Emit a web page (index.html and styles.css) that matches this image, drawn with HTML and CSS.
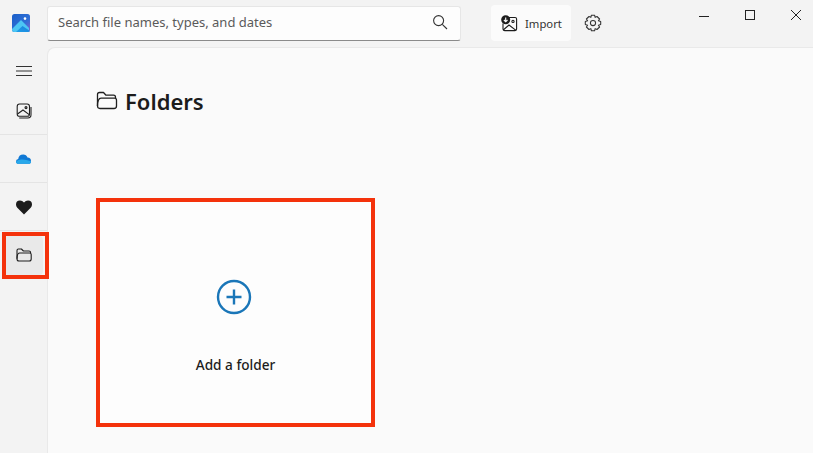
FILE: index.html
```html
<!DOCTYPE html>
<html lang="en">
<head>
<meta charset="utf-8">
<title>Folders</title>
<link rel="stylesheet" href="styles.css">
</head>
<body>
<div class="app">
  <header class="topbar">
    <div class="logo-cell">
      <svg class="logo" width="18" height="18" viewBox="0 0 18 18">
        <defs>
          <linearGradient id="lg" x1="0" y1="0" x2="1" y2="1"><stop offset="0" stop-color="#1a5fc8"/><stop offset="0.6" stop-color="#2f6fd6"/><stop offset="1" stop-color="#8a63cc"/></linearGradient>
          <linearGradient id="lm" x1="0" y1="1" x2="1" y2="0"><stop offset="0" stop-color="#1f9fe8"/><stop offset="1" stop-color="#1a7fdc"/></linearGradient>
        </defs>
        <rect width="18" height="18" rx="2.5" fill="url(#lg)"/>
        <circle cx="13" cy="4.6" r="1.3" fill="#fff"/>
        <path d="M0 15 L9 6 L17 14 V15.5 Q17 18 15 18 H2.5 Q0 18 0 15.5Z" fill="#4cc6f4"/>
        <path d="M4 18 L10.5 12 L18 17 Q17.5 18 15.5 18Z" fill="url(#lm)"/>
      </svg>
    </div>
    <div class="search">
      <span class="search-text">Search file names, types, and dates</span>
      <svg width="16" height="16" viewBox="0 0 16 16" fill="none" stroke="#333" stroke-width="1.1"><circle cx="6.6" cy="6.6" r="5"/><path d="M10.3 10.3 L15 15"/></svg>
    </div>
    <button class="import">
      <svg width="17" height="17" viewBox="0 0 17 17" fill="none" stroke="#1c1c1c" stroke-width="1.1">
        <path d="M8 2.5 H14 Q15.6 2.5 15.6 4 V14 Q15.6 15.6 14 15.6 H3.6 Q2 15.6 2 14 V8.5"/>
        <path d="M2.2 15 L8 10 L15 15.4"/>
        <circle cx="12" cy="6.4" r="1.1"/>
        <circle cx="4.7" cy="4.7" r="4.5" fill="#1c1c1c" stroke="none"/>
        <path d="M4.7 2.4 V6.6 M2.9 5 L4.7 6.8 L6.5 5" stroke="#fff"/>
      </svg>
      <span>Import</span>
    </button>
    <svg class="gear" width="18" height="18" viewBox="0 0 18 18" fill="none" stroke="#333" stroke-width="1.05" stroke-linejoin="round">
      <circle cx="9" cy="9" r="2.6"/>
      <path d="M7.4 1.2 H10.6 L11.1 3.4 L13 2.5 L15.6 5 L14.4 6.8 L16.7 7.4 V10.6 L14.4 11.2 L15.6 13 L13 15.5 L11.1 14.6 L10.6 16.8 H7.4 L6.9 14.6 L5 15.5 L2.4 13 L3.6 11.2 L1.3 10.6 V7.4 L3.6 6.8 L2.4 5 L5 2.5 L6.9 3.4Z"/>
    </svg>
    <div class="window-controls">
      <svg width="12" height="12" viewBox="0 0 12 12" stroke="#222" stroke-width="1"><path d="M1 7.5 H11"/></svg>
      <svg width="12" height="12" viewBox="0 0 12 12" fill="none" stroke="#222" stroke-width="1"><rect x="1.5" y="1.5" width="9" height="9"/></svg>
      <svg width="12" height="12" viewBox="0 0 12 12" stroke="#222" stroke-width="1"><path d="M1 1 L11 11 M11 1 L1 11"/></svg>
    </div>
  </header>
  <div class="body">
    <nav class="nav">
      <div class="nav-item nav-menu">
        <svg width="16" height="12" viewBox="0 0 16 12" stroke="#333" stroke-width="1"><path d="M0 1.5 H16 M0 6 H16 M0 10.5 H16"/></svg>
      </div>
      <div class="nav-item nav-sep">
        <svg width="16" height="16" viewBox="0 0 16 16" fill="none" stroke="#1f1f1f" stroke-width="1.1">
          <rect x="1.2" y="1" width="12.3" height="12.3" rx="2.4"/>
          <path d="M1.5 11 L7 7 L13.2 11.6"/><circle cx="10" cy="4.6" r="1"/>
          <path d="M3.2 15 H11.8 Q15 15 15 11.8 V4"/>
        </svg>
      </div>
      <div class="nav-item nav-sep">
        <svg width="15" height="10" viewBox="0 0 15 10"><path d="M2.6 9.8 Q0 9.8 0 7.4 Q0 5.3 2.2 4.9 Q2.9 0.6 7.2 0.6 Q10.4 0.6 11.5 3.6 Q15 3.8 15 7.2 Q15 9.8 12.4 9.8Z" fill="#1078d4"/><path d="M2.6 9.8 Q0 9.8 0 7.4 Q3 5 6.5 5.6 Q10 6 15 7.2 Q15 9.8 12.4 9.8Z" fill="#28a8ea"/></svg>
      </div>
      <div class="nav-item nav-sep nav-heart">
        <svg width="16" height="15" viewBox="0 0 16 15"><path d="M8 14.5 L1.3 7.8 Q0 6.4 0 4.5 Q0 0.5 4 0.5 Q6.4 0.5 8 2.4 Q9.6 0.5 12 0.5 Q16 0.5 16 4.5 Q16 6.4 14.7 7.8Z" fill="#1c1c1c"/></svg>
      </div>
      <div class="nav-item nav-active">
        <div class="nav-pill">
          <svg width="16" height="14" viewBox="0 0 16 14" fill="none" stroke="#1f1f1f" stroke-width="1.1" stroke-linejoin="round">
            <path d="M1 10.8 V2.4 Q1 1 2.4 1 H5.4 L7.4 3 H13 Q14.6 3 14.6 4.6 V5"/>
            <path d="M1 11 Q1 5 3.6 5 H13.6 Q15.2 5 15.2 6.6 V11 Q15.2 13 13.2 13 H3 Q1 13 1 11Z"/>
          </svg>
        </div>
      </div>
    </nav>
    <main class="main">
      <h1 class="title">
        <svg width="22" height="20" viewBox="0 0 22 20" fill="none" stroke="#1f1f1f" stroke-width="1.3" stroke-linejoin="round">
          <path d="M1.5 15 V3.5 Q1.5 1.5 3.5 1.5 H7.5 L10 4.2 H17.5 Q19.5 4.2 19.5 6.2 V7"/>
          <path d="M1.5 15 Q1.5 7.2 5 7.2 H18.5 Q20.5 7.2 20.5 9.2 V15 Q20.5 17.5 18 17.5 H4 Q1.5 17.5 1.5 15Z"/>
        </svg>
        <span class="title-text">Folders</span>
      </h1>
      <div class="add-card">
        <svg class="add-icon" width="36" height="36" viewBox="0 0 36 36" fill="none" stroke="#1a76b8" stroke-width="2.4"><circle cx="18" cy="18" r="16"/><path d="M18 10.5 V25.5 M10.5 18 H25.5"/></svg>
        <span class="add-label">Add a folder</span>
      </div>
    </main>
  </div>
</div>
</body>
</html>
```
FILE: styles.css
```css
*, *::after { box-sizing: border-box; }
html, body { margin: 0; height: 100%; overflow: hidden; }
body { background: #f3f3f3; font-family: "Noto Sans", "Open Sans", sans-serif; color: #1c1c1c; }
.app { width: 813px; height: 453px; display: flex; flex-direction: column; }

.topbar { height: 47px; display: flex; align-items: flex-start; flex: none; }
.logo-cell { width: 47px; padding: 14px 0 0 12px; flex: none; }
.logo { display: block; }
.search { width: 414px; height: 35px; margin-top: 6px; padding: 0 12px 3px 10px; display: flex; align-items: center; justify-content: space-between; background: #fdfdfd; border: 1px solid #e6e6e6; border-bottom: 1px solid #8a8a8a; border-radius: 3px; }
.search-text { font-size: 13px; color: #5a5a5a; }
.import { width: 80px; height: 36px; margin: 5px 0 0 30px; padding: 0 0 0 10px; display: flex; align-items: center; gap: 7px; background: #fbfbfb; border: 0; border-radius: 4px; font: inherit; font-size: 11.3px; color: #333; }
.gear { margin: 14px 0 0 13px; flex: none; }
.window-controls { margin: 9px 0 0 auto; padding-right: 11px; display: flex; gap: 34px; }
.window-controls svg { display: block; }

.body { flex: 1; display: flex; min-height: 0; }
.nav { width: 47px; flex: none; }
.nav-item { width: 47px; height: 48px; display: flex; align-items: center; justify-content: center; }
.nav-menu { height: 40px; padding-top: 8px; }
.nav-sep { border-bottom: 1px solid #e4e4e4; }
.nav-heart { padding-top: 2px; }
.nav-active { position: relative; }
.nav-active::after { content: ""; position: absolute; left: 2px; top: 1px; width: 47px; height: 47px; border: 4px solid #f4320b; }
.nav-pill { width: 39px; height: 39px; display: flex; align-items: center; justify-content: center; background: #e9e9e9; border-radius: 4px; }

.main { flex: 1; padding: 39px 0 0 48px; background: #fafafa; border-top: 1px solid #e9e9e9; border-left: 1px solid #e9e9e9; border-top-left-radius: 8px; }
.title { margin: 0; height: 28px; display: flex; align-items: center; gap: 7px; font-size: 22px; font-weight: 600; color: #1c1c1c; }
.add-card { width: 279px; height: 229px; margin-top: 83px; padding-top: 77px; display: flex; flex-direction: column; align-items: center; background: #fdfdfd; border: 4px solid #f4320b; }
.add-icon { margin-right: 3px; }
.add-label { margin-top: 40px; font-size: 13.6px; font-weight: 500; color: #1c1c1c; }
```
